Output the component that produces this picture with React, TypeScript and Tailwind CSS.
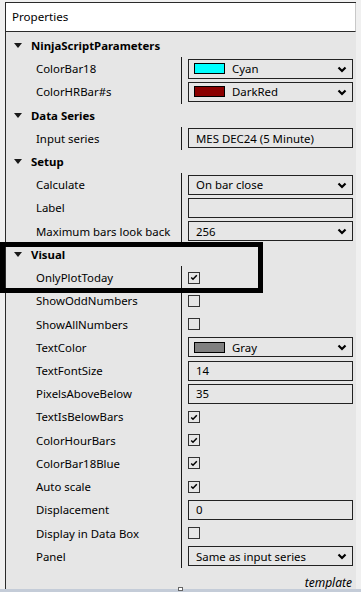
import React from "react";

type Val =
  | { t: "color"; color: string; name: string }
  | { t: "select"; text: string }
  | { t: "text"; text: string }
  | { t: "check"; checked: boolean };

const sections: { title: string; items: { label: string; value: Val }[] }[] = [
  {
    title: "NinjaScriptParameters",
    items: [
      { label: "ColorBar18", value: { t: "color", color: "#00ffff", name: "Cyan" } },
      { label: "ColorHRBar#s", value: { t: "color", color: "#8b0000", name: "DarkRed" } },
    ],
  },
  {
    title: "Data Series",
    items: [{ label: "Input series", value: { t: "text", text: "MES DEC24 (5 Minute)" } }],
  },
  {
    title: "Setup",
    items: [
      { label: "Calculate", value: { t: "select", text: "On bar close" } },
      { label: "Label", value: { t: "text", text: "" } },
      { label: "Maximum bars look back", value: { t: "select", text: "256" } },
    ],
  },
  {
    title: "Visual",
    items: [
      { label: "OnlyPlotToday", value: { t: "check", checked: true } },
      { label: "ShowOddNumbers", value: { t: "check", checked: false } },
      { label: "ShowAllNumbers", value: { t: "check", checked: false } },
      { label: "TextColor", value: { t: "color", color: "#808080", name: "Gray" } },
      { label: "TextFontSize", value: { t: "text", text: "14" } },
      { label: "PixelsAboveBelow", value: { t: "text", text: "35" } },
      { label: "TextIsBelowBars", value: { t: "check", checked: true } },
      { label: "ColorHourBars", value: { t: "check", checked: true } },
      { label: "ColorBar18Blue", value: { t: "check", checked: true } },
      { label: "Auto scale", value: { t: "check", checked: true } },
      { label: "Displacement", value: { t: "text", text: "0" } },
      { label: "Display in Data Box", value: { t: "check", checked: false } },
      { label: "Panel", value: { t: "select", text: "Same as input series" } },
    ],
  },
];

function Chevron() {
  return (
    <svg width="10" height="7" viewBox="0 0 10 7" className="absolute right-[5px] top-[6px]">
      <polyline points="1.5,1.5 5,5 8.5,1.5" fill="none" stroke="#000" strokeWidth="2.2" />
    </svg>
  );
}

function Value({ v }: { v: Val }) {
  if (v.t === "check") {
    return (
      <div className="w-[12px] h-[12px] border border-[#333] flex items-center justify-center">
        {v.checked && (
          <svg width="8" height="7" viewBox="0 0 8 7">
            <polyline points="1.2,3.5 3,5.3 6.8,1.3" fill="none" stroke="#000" strokeWidth="1.5" />
          </svg>
        )}
      </div>
    );
  }
  return (
    <div className="relative w-[165px] h-[20px] border border-[#222] flex items-center">
      {v.t === "color" ? (
        <>
          <div className="ml-[5px] w-[31px] h-[11px] border border-black" style={{ backgroundColor: v.color }} />
          <span className="ml-[7px]">{v.name}</span>
        </>
      ) : (
        <span className="ml-[7px]">{v.text}</span>
      )}
      {(v.t === "color" || v.t === "select") && <Chevron />}
    </div>
  );
}

export default function App() {
  return (
    <div
      className="relative w-[361px] h-[592px] bg-[#f0f0f0] overflow-hidden text-[11.4px] text-black"
      style={{ fontFamily: '"Noto Sans", "Open Sans", sans-serif' }}
    >
      <div className="absolute left-[5px] top-[2px] w-[351px] h-[587px] border-l border-t border-[#2a2a2a] flex flex-col">
        <div className="h-[29px] bg-white border-b border-[#2a2a2a] flex items-center pl-[6px] border-r border-r-[#c8c8c8] text-[11.6px]">
          Properties
        </div>
        <div className="flex-1 bg-[#e6e6e6] pt-[1.9px] flex flex-col">
          {sections.map((s) => (
            <div key={s.title} className="flex flex-col">
              <div className="h-[23.23px] flex items-center">
                <svg width="8" height="5" viewBox="0 0 8 5" className="ml-[8px]">
                  <polygon points="0,0 8,0 4,5" fill="#1a1a1a" />
                </svg>
                <span className="ml-[9px] font-bold">{s.title}</span>
              </div>
              <div className="flex">
                <div className="w-[175px] flex flex-col">
                  {s.items.map((it) => (
                    <div key={it.label} className="h-[23.23px] flex items-center pl-[30px] whitespace-nowrap">
                      {it.label}
                    </div>
                  ))}
                </div>
                <div className="w-px bg-[#1a1a1a]" />
                <div className="flex-1 flex flex-col">
                  {s.items.map((it) => (
                    <div key={it.label} className="h-[23.23px] flex items-center pl-[6px]">
                      <Value v={it.value} />
                    </div>
                  ))}
                </div>
              </div>
            </div>
          ))}
          <div className="flex-1 flex items-end justify-end pr-[4px]">
            <span className="italic leading-[14px] mb-[-1px] text-[12px]">template</span>
          </div>
        </div>
      </div>
      <div className="absolute left-0 right-0 bottom-0 h-[3px] bg-[#c4ccd8]" />
      <div className="absolute left-[178px] bottom-[1px] w-[5px] h-[4px] border border-[#666] bg-white" />
      <div className="absolute left-0 top-[242px] w-[263px] h-[51px] border-[5px] border-black" />
    </div>
  );
}
